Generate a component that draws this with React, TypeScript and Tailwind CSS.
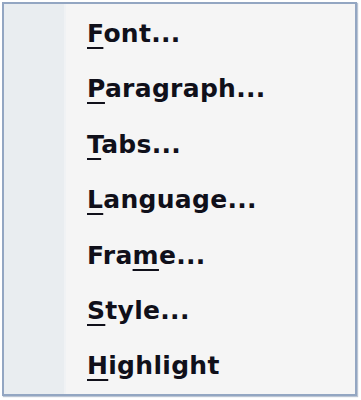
const items: { pre: string; key: string; post: string }[] = [
  { pre: '', key: 'F', post: 'ont...' },
  { pre: '', key: 'P', post: 'aragraph...' },
  { pre: '', key: 'T', post: 'abs...' },
  { pre: '', key: 'L', post: 'anguage...' },
  { pre: 'Fra', key: 'm', post: 'e...' },
  { pre: '', key: 'S', post: 'tyle...' },
  { pre: '', key: 'H', post: 'ighlight' },
];

export default function App() {
  return (
    <div className="w-[361px] h-[400px] bg-white pt-[2px] pl-[2px]">
      <div className="w-[355px] h-[394px] border-2 border-[#93a6c2] bg-[#f5f5f5] flex shadow-[1px_1px_1px_rgba(120,140,170,0.5)]">
        <div className="w-[62px] shrink-0 bg-[#e9edf0] border-r-2 border-[#f0f2f4]" />
        <ul className="flex flex-col pt-[2px] pl-[21px] font-['DejaVu_Sans',sans-serif] font-bold text-[25px] tracking-[0.3px] text-[#10101a]">
          {items.map((it) => (
            <li key={it.key} className="h-[55.6px] flex items-center">
              <span>
                {it.pre}
                <span className="underline decoration-2 underline-offset-[5px]">{it.key}</span>
                {it.post}
              </span>
            </li>
          ))}
        </ul>
      </div>
    </div>
  );
}
